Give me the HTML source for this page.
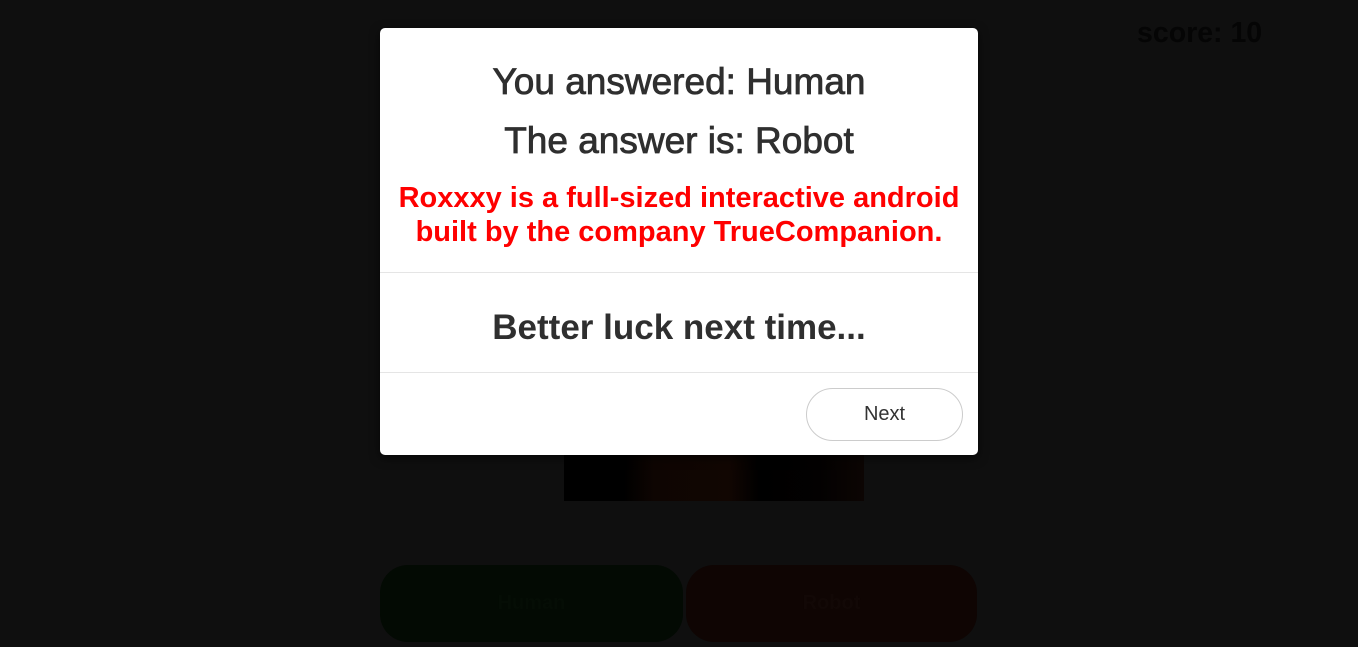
<!DOCTYPE html>
<html><head><meta charset="utf-8"><style>
*{margin:0;padding:0;box-sizing:border-box}
html,body{width:1358px;height:647px;overflow:hidden;background:#0f0f0f;font-family:"Liberation Sans",Arial,sans-serif}
.score{position:absolute;left:1137px;top:17px;font-size:28.5px;font-weight:bold;color:#050505}
.img{position:absolute;left:564px;top:440px;width:300px;height:61px;background:linear-gradient(90deg,#000 0,#000 20%,#0e0502 30%,#110602 55%,#000 65%,#030101 85%,#0c0503 100%)}
.btn{position:absolute;top:565px;height:77px;border-radius:28px;font-size:20px;font-weight:bold;display:flex;align-items:center;justify-content:center}
.h{left:380px;width:303px;background:#030a03;color:#050d05}
.r{left:686px;width:291px;background:#0f0503;color:#120806}
.modal{position:absolute;left:380px;top:28px;width:598px;height:427px;background:#fff;border-radius:5px;box-shadow:0 3px 10px rgba(0,0,0,.6);text-align:center;color:#333}
.modal h2{font-size:37px;font-weight:normal;position:absolute;width:100%;left:0;color:#2f2f2f;-webkit-text-stroke:.8px #2f2f2f}
.red{position:absolute;width:100%;font-size:29px;font-weight:bold;color:#f00;line-height:34px}
.hr{position:absolute;left:0;width:100%;height:1px;background:#e5e5e5}
.next{position:absolute;left:426px;top:360px;width:157px;height:53px;border:1px solid #ccc;border-radius:27px;font-size:20px;color:#333;display:flex;align-items:center;justify-content:center}
</style></head><body>
<div class="score">score: 10</div>
<div class="img"></div>
<div class="btn h">Human</div>
<div class="btn r">Robot</div>
<div class="modal">
<h2 style="top:33px">You answered: Human</h2>
<h2 style="top:92px">The answer is: Robot</h2>
<div class="red" style="top:153px">Roxxxy is a full-sized interactive android<br>built by the company TrueCompanion.</div>
<div class="hr" style="top:244px"></div>
<h2 style="top:280px;font-weight:bold;-webkit-text-stroke:0;font-size:35px">Better luck next time...</h2>
<div class="hr" style="top:344px"></div>
<div class="next">Next</div>
</div>
</body></html>
